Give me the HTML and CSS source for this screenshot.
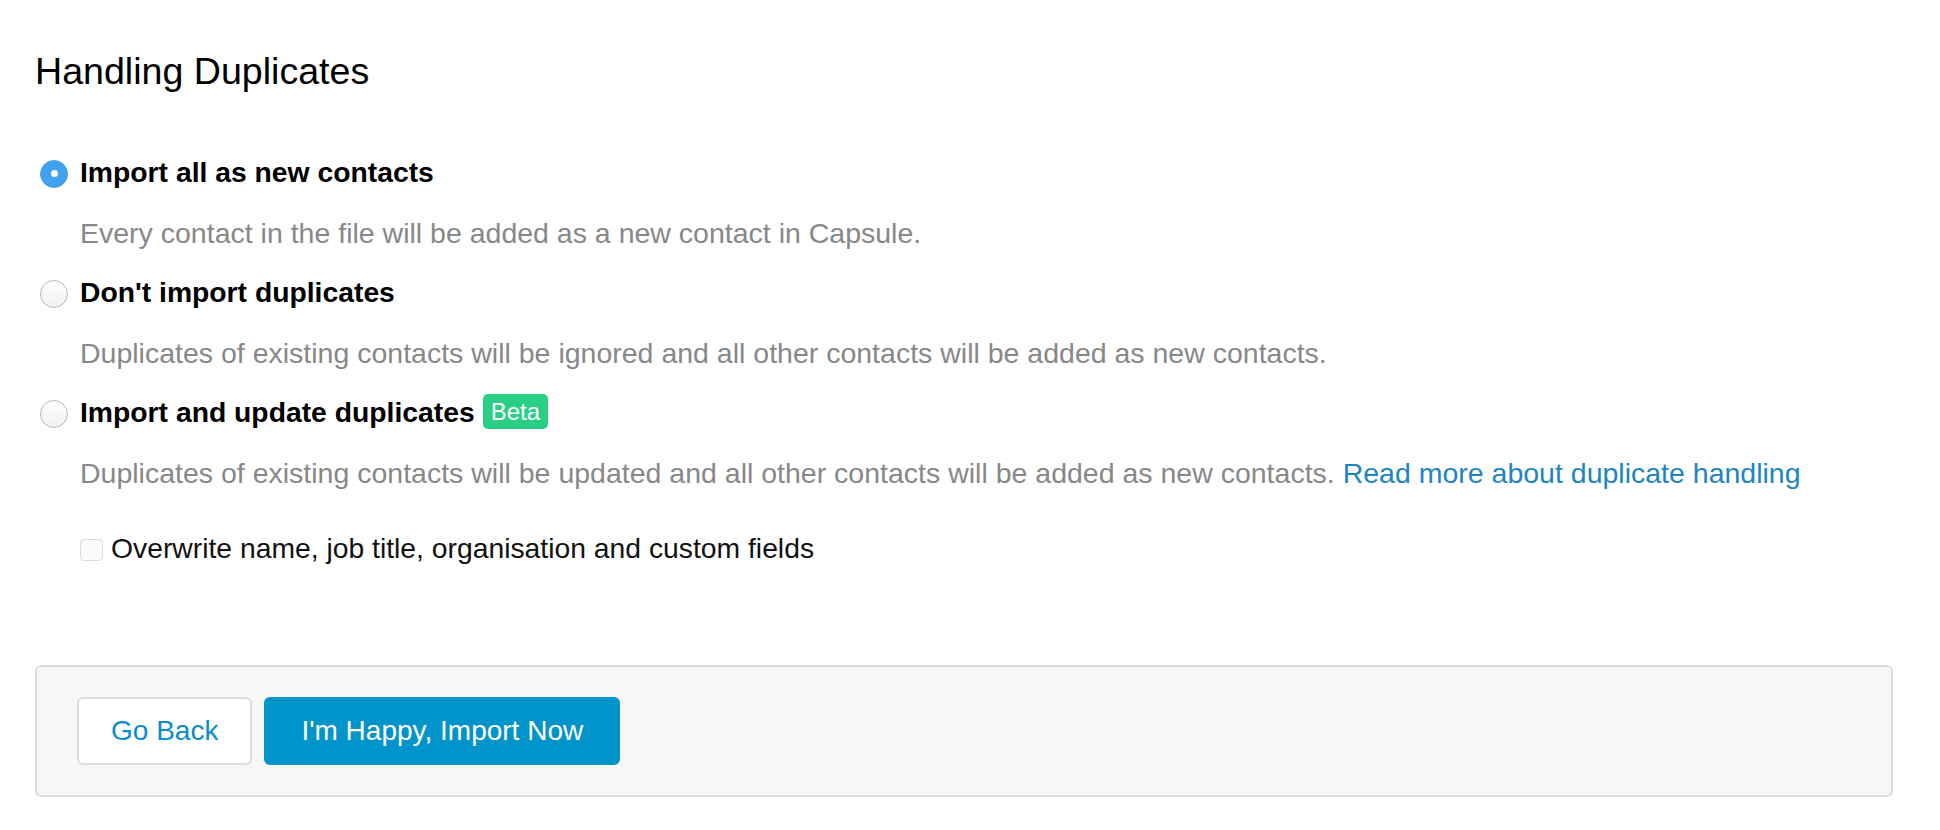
FILE: index.html
```html
<!DOCTYPE html>
<html lang="en">
<head>
<meta charset="utf-8">
<title>Handling Duplicates</title>
<link rel="stylesheet" href="styles.css">
</head>
<body>
<main class="page">
  <h1 class="title">Handling Duplicates</h1>

  <div class="options">
    <div class="option">
      <label class="option-row">
        <span class="radio radio-checked"><span class="radio-dot"></span></span>
        <span class="option-label">Import all as new contacts</span>
      </label>
      <p class="option-desc">Every contact in the file will be added as a new contact in Capsule.</p>
    </div>

    <div class="option">
      <label class="option-row">
        <span class="radio"></span>
        <span class="option-label">Don't import duplicates</span>
      </label>
      <p class="option-desc">Duplicates of existing contacts will be ignored and all other contacts will be added as new contacts.</p>
    </div>

    <div class="option">
      <label class="option-row">
        <span class="radio"></span>
        <span class="option-label">Import and update duplicates</span>
        <span class="badge">Beta</span>
      </label>
      <p class="option-desc">Duplicates of existing contacts will be updated and all other contacts will be added as new contacts. <a class="link" href="#">Read more about duplicate handling</a></p>
    </div>
  </div>

  <label class="check-row">
    <span class="checkbox"></span>
    <span class="check-label">Overwrite name, job title, organisation and custom fields</span>
  </label>

  <div class="actions">
    <button class="btn btn-default" type="button">Go Back</button>
    <button class="btn btn-primary" type="button">I'm Happy, Import Now</button>
  </div>
</main>
</body>
</html>
```

FILE: styles.css
```css
* {
  box-sizing: border-box;
}

html, body {
  margin: 0;
  padding: 0;
  background: #ffffff;
}

body {
  font-family: "Liberation Sans", Arial, Helvetica, sans-serif;
  color: #000000;
}

.page {
  padding: 49px 47px 0 35px;
}

.title {
  margin: 0;
  font-size: 37.6px;
  line-height: 44px;
  font-weight: normal;
  color: #000000;
}

.options {
  margin-top: 62px;
  display: flex;
  flex-direction: column;
  gap: 25px;
}

.option {
  display: flex;
  flex-direction: column;
}

.option-row {
  display: flex;
  align-items: center;
  height: 34px;
}

.radio {
  width: 28px;
  height: 28px;
  margin-left: 5px;
  margin-right: 12px;
  margin-top: 3px;
  border-radius: 50%;
  border: 1px solid #b8b8b8;
  background: linear-gradient(#ffffff, #f1f1f1);
  display: flex;
  align-items: center;
  justify-content: center;
  flex: none;
}

.radio-checked {
  border-color: #42a1ec;
  background: #42a1ec;
}

.radio-dot {
  width: 7px;
  height: 7px;
  border-radius: 50%;
  background: #ffffff;
}

.option-label {
  font-size: 28.3px;
  line-height: 34px;
  font-weight: bold;
  color: #000000;
}

.badge {
  margin-left: 8px;
  height: 35px;
  padding: 0 8px;
  border-radius: 5px;
  background: #29cf84;
  color: #ffffff;
  font-size: 24px;
  line-height: 35px;
  margin-top: -2px;
}

.option-desc {
  margin: 27px 0 0 45px;
  font-size: 28.5px;
  line-height: 34px;
  color: #888888;
}

.link {
  color: #1f84c2;
  text-decoration: none;
}

.check-row {
  margin-top: 41px;
  margin-left: 45px;
  display: flex;
  align-items: center;
  height: 34px;
}

.checkbox {
  width: 23px;
  height: 22px;
  margin-top: 3px;
  margin-right: 8px;
  border: 1px solid #dcdcdc;
  border-radius: 4px;
  background: #fbfbfb;
  flex: none;
}

.check-label {
  font-size: 28.3px;
  line-height: 34px;
  color: #111111;
}

.actions {
  margin-top: 100px;
  display: flex;
  gap: 12px;
  padding: 30px 40px;
  background: #f7f7f7;
  border: 2px solid #dddddd;
  border-radius: 6px;
}

.btn {
  font-family: "Liberation Sans", Arial, Helvetica, sans-serif;
  font-size: 28px;
  height: 68px;
  border-radius: 6px;
  border: 2px solid #dddddd;
  cursor: pointer;
}

.btn-default {
  padding: 0 32px;
  background: #ffffff;
  color: #0a8dcc;
}

.btn-primary {
  padding: 0 35px;
  background: #0094cb;
  border-color: #0094cb;
  color: #ffffff;
}
```
